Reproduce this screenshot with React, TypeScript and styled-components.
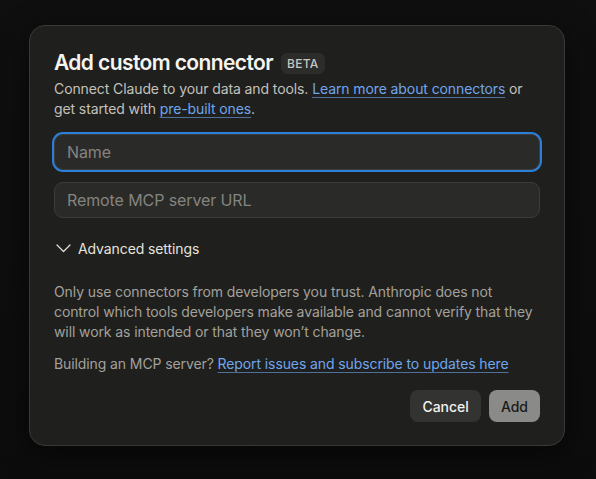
import styled, { createGlobalStyle } from "styled-components";

const GlobalStyle = createGlobalStyle`
    html, body {
        margin: 0;
        padding: 0;
        background: #0e0e0e;
        font-family: Inter, "Noto Sans", "Liberation Sans", sans-serif;
        -webkit-font-smoothing: antialiased;
    }
    * {
        box-sizing: border-box;
    }
`;

const Backdrop = styled.div`
    width: 596px;
    height: 479px;
    display: flex;
    align-items: flex-start;
    padding: 25px 0 0 29px;
    background: linear-gradient(180deg, #0f0f0f 0, #0c0c0c 100%);
`;

const Dialog = styled.div`
    width: 536px;
    background: #1f1f1e;
    border: 1px solid #393937;
    border-radius: 16px;
    padding: 23px 24px 23px;
    display: flex;
    flex-direction: column;
    box-shadow: 0 8px 30px rgba(0, 0, 0, 0.5);
`;

const TitleRow = styled.div`
    display: flex;
    align-items: center;
    gap: 8px;
`;

const Title = styled.h2`
    margin: 0;
    font-size: 21px;
    line-height: 28px;
    font-weight: 600;
    color: #f5f4ef;
    letter-spacing: -0.6px;
`;

const Badge = styled.span`
    background: #2c2c2b;
    color: #c8c6bf;
    font-size: 12px;
    font-weight: 500;
    letter-spacing: 0.3px;
    padding: 3px 6px;
    border-radius: 6px;
    line-height: 15px;
`;

const Text = styled.p<{ $tone?: "light" | "muted" }>`
    margin: 0;
    font-size: 14px;
    line-height: 20px;
    letter-spacing: -0.1px;
    color: ${(p) => (p.$tone === "muted" ? "#a3a19b" : "#c3c1ba")};
`;

const Subtitle = styled(Text)`
    margin-top: 2px;
`;

const Link = styled.a`
    color: #6fa6ec;
    text-decoration: underline;
    text-decoration-color: rgba(111, 166, 236, 0.6);
    text-underline-offset: 3px;
    text-decoration-thickness: 1px;
    cursor: pointer;
`;

const Fields = styled.div`
    display: flex;
    flex-direction: column;
    gap: 12px;
    margin-top: 15px;
`;

const Input = styled.input<{ $focused?: boolean }>`
    width: 100%;
    height: 36px;
    background: #2a2a29;
    border: 1px solid #3c3c3a;
    border-radius: 9px;
    padding: 0 12px;
    font-family: inherit;
    font-size: 16px;
    letter-spacing: -0.1px;
    color: #f0efe9;
    outline: none;
    box-shadow: ${(p) => (p.$focused ? "0 0 0 2px #2b7fd8" : "none")};
    &::placeholder {
        color: #85847f;
    }
`;

const Toggle = styled.button`
    display: flex;
    align-items: center;
    gap: 7px;
    margin-top: 20px;
    padding: 0 2px;
    background: none;
    border: none;
    font-family: inherit;
    font-size: 14px;
    letter-spacing: -0.1px;
    color: #e6e4dd;
    cursor: pointer;
    height: 20px;
`;

const Notes = styled.div`
    display: flex;
    flex-direction: column;
    gap: 12px;
    margin-top: 24px;
`;

const Actions = styled.div`
    display: flex;
    justify-content: flex-end;
    gap: 8px;
    margin-top: 16px;
`;

const Button = styled.button<{ $variant: "secondary" | "primary" }>`
    height: 32px;
    padding: 0 12px;
    border-radius: 8px;
    border: none;
    font-family: inherit;
    font-size: 14px;
    font-weight: 500;
    background: ${(p) => (p.$variant === "primary" ? "#8a8a88" : "#333332")};
    color: ${(p) => (p.$variant === "primary" ? "#1a1a19" : "#f2f1ec")};
    cursor: pointer;
`;

const Chevron = () => (
    <svg width="15" height="15" viewBox="0 0 15 15" fill="none">
        <path d="M1 4 L7.5 10.5 L14 4" stroke="#e6e4dd" strokeWidth="1.2" strokeLinecap="round" strokeLinejoin="round" />
    </svg>
);

export default function App() {
    return (
        <>
            <GlobalStyle />
            <Backdrop>
                <Dialog>
                    <TitleRow>
                        <Title>Add custom connector</Title>
                        <Badge>BETA</Badge>
                    </TitleRow>
                    <Subtitle>
                        Connect Claude to your data and tools. <Link>Learn more about connectors</Link> or get
                        started with <Link>pre-built ones</Link>.
                    </Subtitle>
                    <Fields>
                        <Input $focused placeholder="Name" autoFocus />
                        <Input placeholder="Remote MCP server URL" />
                    </Fields>
                    <Toggle>
                        <Chevron />
                        Advanced settings
                    </Toggle>
                    <Notes>
                        <Text $tone="muted">
                            Only use connectors from developers you trust. Anthropic does not control which tools
                            developers make available and cannot verify that they will work as intended or that they
                            won’t change.
                        </Text>
                        <Text $tone="muted">
                            Building an MCP server? <Link>Report issues and subscribe to updates here</Link>
                        </Text>
                    </Notes>
                    <Actions>
                        <Button $variant="secondary">Cancel</Button>
                        <Button $variant="primary">Add</Button>
                    </Actions>
                </Dialog>
            </Backdrop>
        </>
    );
}
